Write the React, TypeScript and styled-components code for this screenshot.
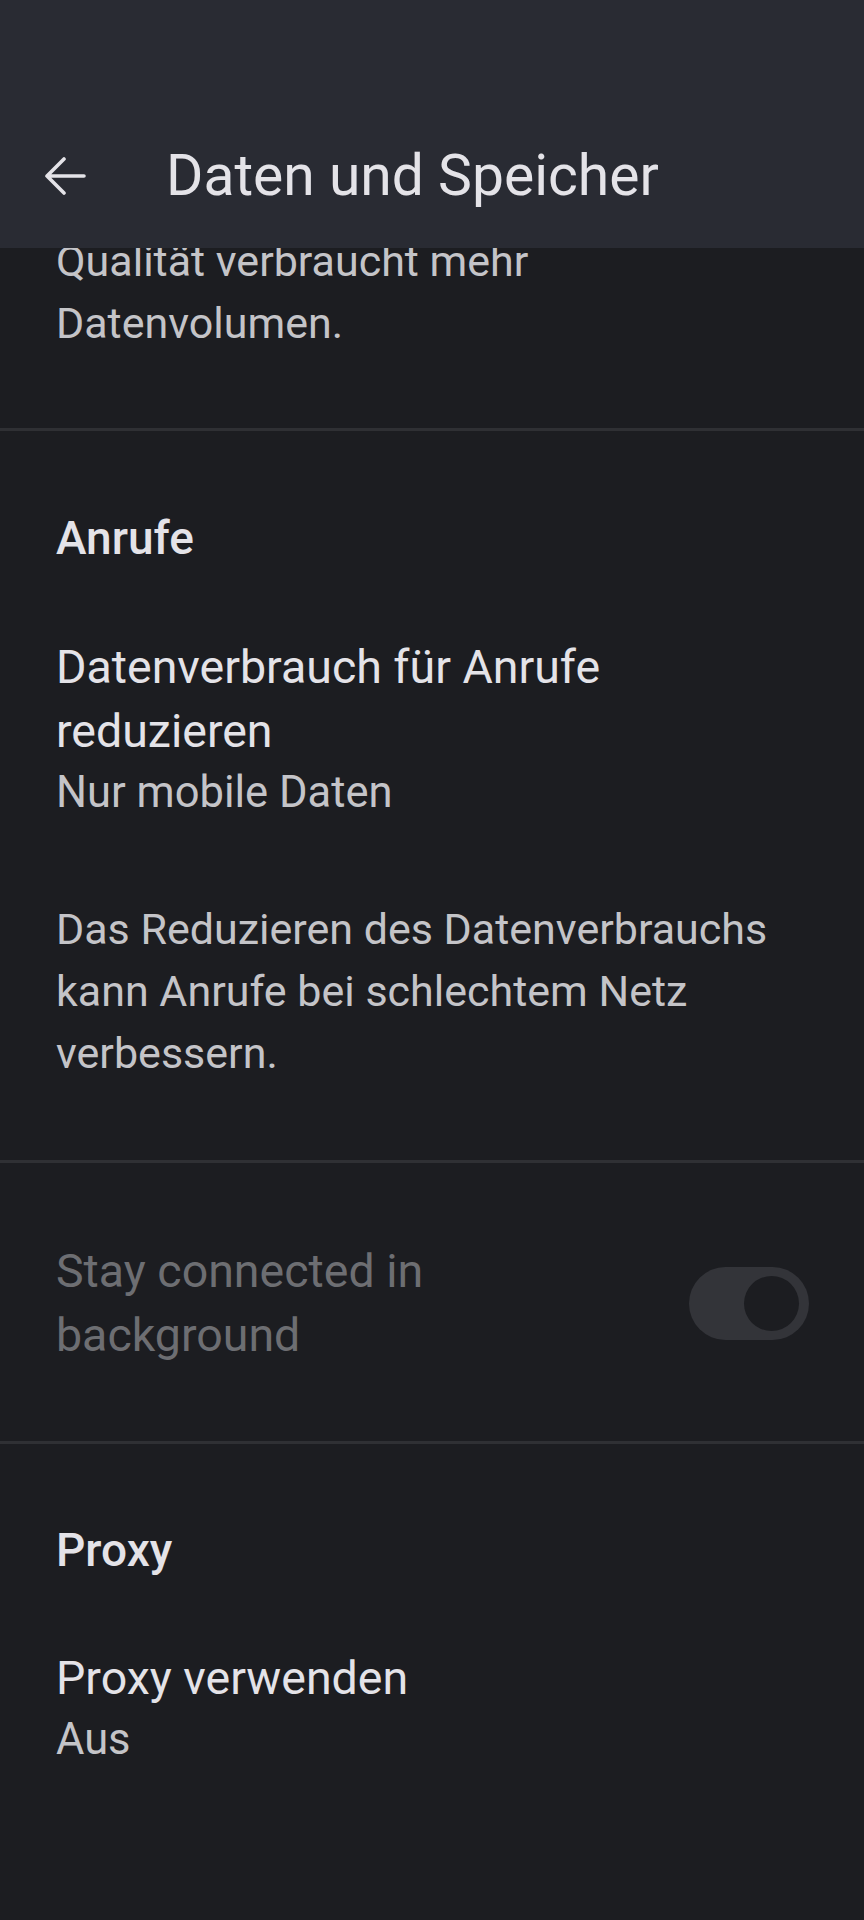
import React from "react"
import styled, {createGlobalStyle} from "styled-components"

const GlobalStyle = createGlobalStyle`
html, body {
  margin: 0;
  padding: 0;
  background: #1c1d21;
}
body {
  font-family: Roboto, "Noto Sans", "Liberation Sans", sans-serif;
  -webkit-font-smoothing: antialiased;
}
`

const Screen = styled.div`
  width: 864px;
  height: 1920px;
  display: flex;
  flex-direction: column;
  background: #1c1d21;
  overflow: hidden;
`

const AppBar = styled.header`
  flex: none;
  height: 248px;
  padding-top: 104px;
  box-sizing: border-box;
  background: #292b33;
  position: relative;
  z-index: 1;
`

const Toolbar = styled.div`
  height: 144px;
  display: flex;
  align-items: center;
  padding-left: 44px;
  gap: 80px;
`

const BackButton = styled.button`
  width: 42px;
  height: 38px;
  padding: 0;
  border: 0;
  background: none;
  display: flex;
  align-items: center;
  justify-content: center;
`

const Title = styled.h1`
  margin: 0;
  font-size: 57px;
  line-height: 64px;
  font-weight: 400;
  color: #e4e3e8;
`

const Scroll = styled.main`
  flex: 1;
  overflow: hidden;
`

// list is scrolled a bit, the first summary sits under the app bar
const Content = styled.div`
  margin-top: -18px;
`

const Section = styled.section<{$top?: number; $bottom?: number}>`
  padding: ${p => p.$top ?? 0}px 56px ${p => p.$bottom ?? 0}px;
  border-bottom: 3px solid #2f3034;

  &:last-child {
    border-bottom: 0;
  }
`

const Category = styled.h2`
  margin: 0;
  font-size: 46px;
  line-height: 56px;
  font-weight: 500;
  color: #e4e3e8;
`

const Pref = styled.div<{$gap?: number}>`
  margin-top: ${p => p.$gap ?? 0}px;
  display: flex;
  align-items: center;
  justify-content: space-between;
`

const PrefText = styled.div`
  display: flex;
  flex-direction: column;
`

const PrefTitle = styled.div<{$disabled?: boolean; $width?: number}>`
  font-size: 46.5px;
  line-height: 64px;
  color: ${p => p.$disabled ? "#6d6e72" : "#e4e3e8"};
  max-width: ${p => p.$width ? `${p.$width}px` : "none"};
`

const Summary = styled.div`
  font-size: 43.5px;
  line-height: 60px;
  color: #c4c4c8;
`

const Description = styled.p<{$gap?: number}>`
  margin: ${p => p.$gap ?? 0}px 0 0;
  font-size: 43px;
  line-height: 62px;
  color: #c4c4c8;
`

const Track = styled.div`
  flex: none;
  width: 120px;
  height: 73px;
  margin-right: -1px;
  border-radius: 37px;
  background: #333439;
  display: flex;
  align-items: center;
  justify-content: flex-end;
  padding-right: 10px;
  box-sizing: border-box;
`

const Thumb = styled.div`
  width: 55px;
  height: 55px;
  border-radius: 50%;
  background: #1c1d21;
`

function BackArrow() {
    return <svg width="42" height="38" viewBox="0 0 42 38" fill="none">
        <path d="M3 19H40M3 19L20 2M3 19L20 36" stroke="#e4e3e8" strokeWidth="3.6"
              strokeLinecap="round" strokeLinejoin="round"/>
    </svg>
}

export default function App() {
    return <>
        <GlobalStyle/>
        <Screen>
            <AppBar>
                <Toolbar>
                    <BackButton aria-label="Zurück"><BackArrow/></BackButton>
                    <Title>Daten und Speicher</Title>
                </Toolbar>
            </AppBar>
            <Scroll>
                <Content>
                    <Section $bottom={74}>
                        <Description>Qualität verbraucht mehr<br/>Datenvolumen.</Description>
                    </Section>
                    <Section $top={79} $bottom={76}>
                        <Category>Anrufe</Category>
                        <Pref $gap={69}>
                            <PrefText>
                                <PrefTitle $width={620}>Datenverbrauch für Anrufe reduzieren</PrefTitle>
                                <Summary>Nur mobile Daten</Summary>
                            </PrefText>
                        </Pref>
                        <Description $gap={75}>
                            Das Reduzieren des Datenverbrauchs kann Anrufe bei schlechtem Netz verbessern.
                        </Description>
                    </Section>
                    <Section $top={76} $bottom={74}>
                        <Pref>
                            <PrefText>
                                <PrefTitle $disabled $width={420}>Stay connected in background</PrefTitle>
                            </PrefText>
                            <Track><Thumb/></Track>
                        </Pref>
                    </Section>
                    <Section $top={78}>
                        <Category>Proxy</Category>
                        <Pref $gap={68}>
                            <PrefText>
                                <PrefTitle>Proxy verwenden</PrefTitle>
                                <Summary>Aus</Summary>
                            </PrefText>
                        </Pref>
                    </Section>
                </Content>
            </Scroll>
        </Screen>
    </>
}
